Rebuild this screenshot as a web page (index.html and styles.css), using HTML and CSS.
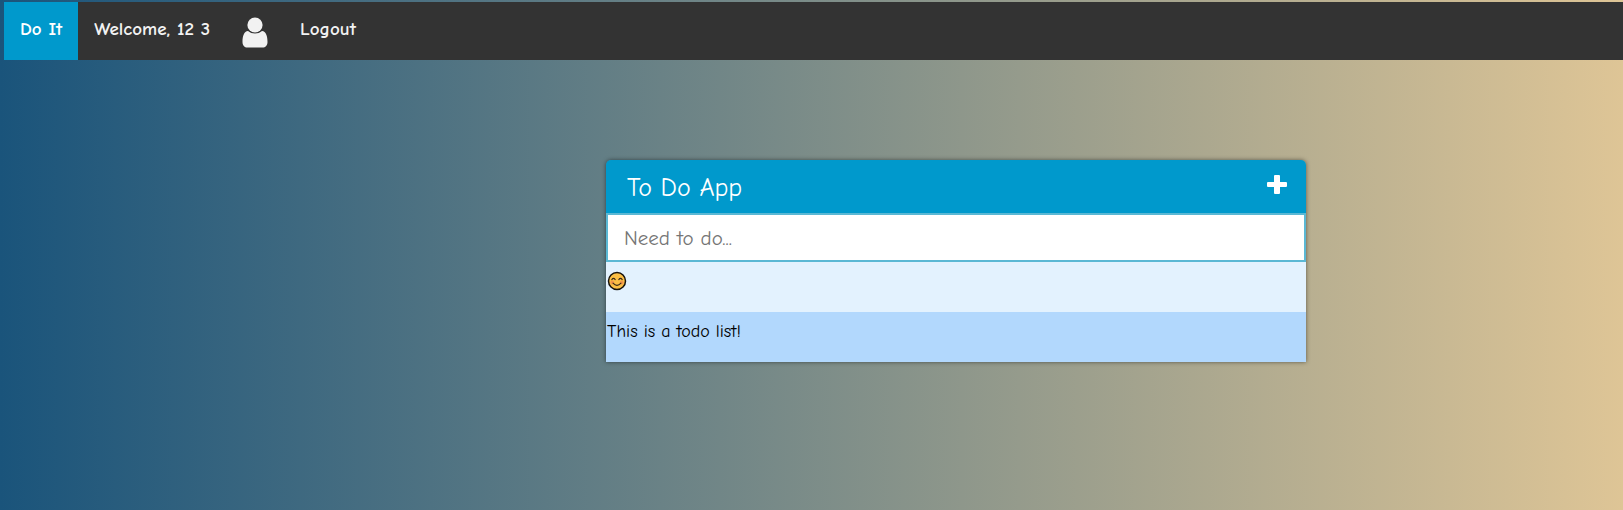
FILE: index.html
```html
<!DOCTYPE html>
<html lang="en">
<head>
<meta charset="utf-8">
<meta name="viewport" content="width=device-width, initial-scale=1">
<title>Do It</title>
<link rel="stylesheet" href="styles.css">
</head>
<body>
<nav class="navbar">
  <a class="nav-link active" href="#">Do It</a>
  <a class="nav-link" href="#">Welcome, 12 3</a>
  <a class="nav-link nav-user" href="#" aria-label="Profile">
    <svg class="user-icon" viewBox="0 0 26 31" aria-hidden="true">
      <path d="M6 14C2 14.500 0.500 19 0.500 25C0.500 28.500 2.500 30.500 5.500 30.500H20.500C23.500 30.500 25.500 28.500 25.500 25C25.500 19 24 14.500 20 14C18 15.700 15.700 16.500 13 16.500S8 15.700 6 14Z"/>
      <circle cx="13" cy="8" r="7.600"/>
    </svg>
  </a>
  <a class="nav-link" href="#">Logout</a>
</nav>
<main class="content">
  <section class="todo">
    <header class="todo-header">
      <h1 class="todo-title">To Do App</h1>
      <button class="add-button" type="button" aria-label="Add">
        <svg class="plus-icon" viewBox="0 0 20 20" aria-hidden="true">
          <path d="M8 0H12Q13 0 13 1V7H19Q20 7 20 8V11Q20 12 19 12H13V18Q13 19 12 19H8Q7 19 7 18V12H1Q0 12 0 11V8Q0 7 1 7H7V1Q7 0 8 0Z"/>
        </svg>
      </button>
    </header>
    <input class="todo-input" type="text" placeholder="Need to do..." aria-label="Need to do">
    <ul class="todo-list">
      <li class="todo-item">
        <svg class="smile" viewBox="0 0 20 20" role="img" aria-label="Smiling face">
          <circle cx="10" cy="10" r="8.500" fill="#fbbf45" stroke="#17130d" stroke-width="1.500"/>
          <circle cx="5.300" cy="11.500" r="1.900" fill="#f5984a"/>
          <circle cx="14.700" cy="11.500" r="1.900" fill="#f5984a"/>
          <path d="M4.800 8.600Q6.500 6.200 8.200 8.600M11.800 8.600Q13.500 6.200 15.200 8.600M6 12.200Q10 16.500 14 12.200" fill="none" stroke="#3a2a17" stroke-width="1.100" stroke-linecap="round"/>
        </svg>
      </li>
      <li class="todo-item">This is a todo list!</li>
    </ul>
  </section>
</main>
</body>
</html>
```

FILE: styles.css
```css
* {
  box-sizing: border-box;
}

body {
  margin: 0;
  min-height: 100vh;
  padding: 2px 0 0 4px;
  background: linear-gradient(to right, #1a547b, #dec596);
  font-family: "Comic Sans MS", "Comic Neue", "Noto Sans", sans-serif;
  font-size: 18px;
  line-height: 24px;
}

.navbar {
  display: flex;
  height: 58px;
  background: #333333;
}

.nav-link {
  padding: 15px 16px;
  color: #f2f2f2;
  font-size: 19px;
  font-weight: 700;
  text-decoration: none;
  white-space: nowrap;
}

.nav-link.active {
  background: #0099cc;
  color: #ffffff;
}

.user-icon {
  display: block;
  width: 26px;
  height: 31px;
  fill: #f2f2f2;
}

.content {
  display: flex;
  justify-content: center;
  padding: 100px 0 40px 285px;
}

.todo {
  width: 100%;
  max-width: 700px;
  border-radius: 5px 5px 0 0;
  box-shadow: 0 0 4px rgba(0, 0, 0, 0.5);
}

.todo-header {
  display: flex;
  justify-content: space-between;
  align-items: center;
  height: 53px;
  padding: 0 19px 0 21px;
  border-radius: 5px 5px 0 0;
  background: #0099cc;
  color: #ffffff;
}

.todo-title {
  margin: 0;
  padding-top: 2px;
  font-size: 26px;
  font-weight: 400;
  line-height: 32px;
}

.add-button {
  padding: 0 0 4px;
  border: 0;
  background: none;
  color: #ffffff;
  cursor: pointer;
}

.plus-icon {
  display: block;
  width: 20px;
  height: 20px;
  fill: #ffffff;
}

.todo-input {
  display: block;
  width: 100%;
  height: 49px;
  padding: 0 16px;
  border: 2px solid #5bb8d4;
  border-radius: 0;
  background: #ffffff;
  color: #555555;
  font-family: inherit;
  font-size: 21px;
  outline: none;
}

.todo-input::placeholder {
  color: #757575;
  opacity: 1;
}

.todo-list {
  margin: 0;
  padding: 0;
  list-style: none;
}

.todo-item {
  height: 50px;
  padding: 8px 1px;
  background: #e3f2fe;
  color: #000000;
}

.todo-item:nth-child(even) {
  background: #b2d8fd;
}

.smile {
  display: block;
  width: 20px;
  height: 20px;
  margin-top: 1px;
}
```
